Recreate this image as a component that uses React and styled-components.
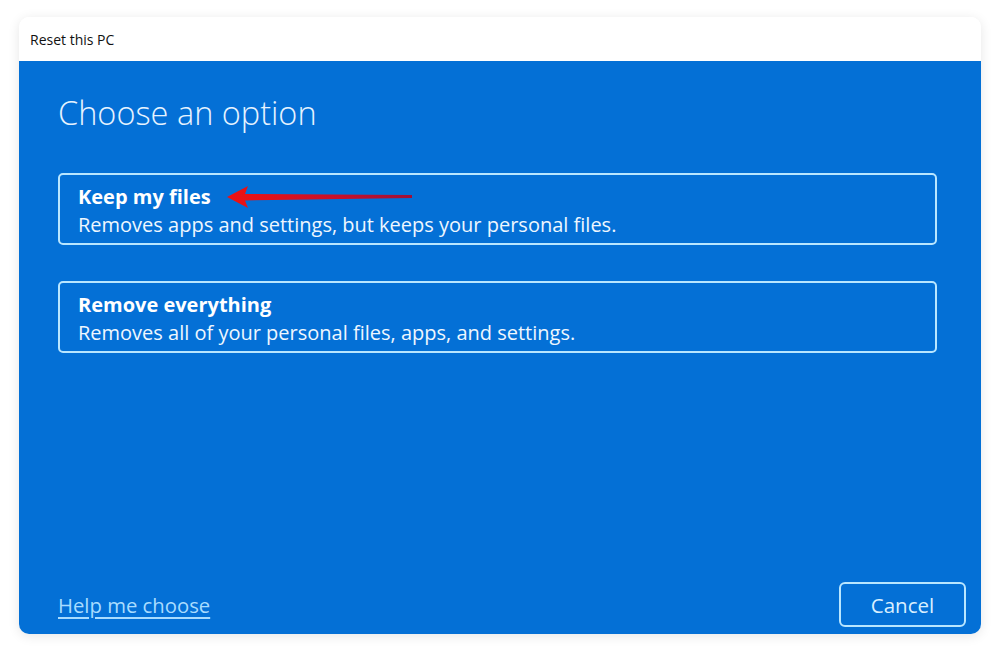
import React from 'react'
import styled, { createGlobalStyle } from 'styled-components'

const Global = createGlobalStyle`
    html, body {
        margin: 0;
        padding: 0;
        background: #ffffff;
    }
    body {
        font-family: "Open Sans", "Noto Sans", sans-serif;
    }
`

const Page = styled.div`
    width: 1000px;
    height: 654px;
    padding: 17px 19px 20px 19px;
    box-sizing: border-box;
`

const Window = styled.section`
    display: flex;
    flex-direction: column;
    height: 617px;
    border-radius: 10px;
    overflow: hidden;
    box-shadow: 0 2px 12px rgba(0, 0, 0, 0.1);
`

const TitleBar = styled.header`
    display: flex;
    align-items: center;
    height: 44px;
    padding-left: 11px;
    background: #ffffff;
    color: #111;
    font-size: 14px;
    font-family: "Open Sans", sans-serif;
`

const Body = styled.main`
    flex: 1;
    display: flex;
    flex-direction: column;
    background: #0470d6;
    padding: 29px 44px 7px 39px;
`

const Heading = styled.h1`
    margin: 0 0 37px 0;
    font-weight: 300;
    font-size: 32.5px;
    line-height: 46px;
    color: #e6f3ff;
`

const Option = styled.button`
    position: relative;
    display: flex;
    flex-direction: column;
    align-items: flex-start;
    justify-content: center;
    height: 72px;
    margin-bottom: 36px;
    padding: 4px 18px 0 18px;
    background: transparent;
    border: 2px solid #b9e6ff;
    border-radius: 5px;
    color: #ffffff;
    font-family: "Open Sans", sans-serif;
    text-align: left;
    cursor: pointer;
`

const OptionTitle = styled.span`
    font-weight: 700;
    font-size: 20px;
    line-height: 28px;
`

const OptionText = styled.span`
    font-size: 20px;
    line-height: 28px;
    color: #eef7ff;
`

const Arrow = styled.svg`
    position: absolute;
    left: 166px;
    top: 9px;
`

const Footer = styled.footer`
    margin-top: auto;
    display: flex;
    align-items: center;
    justify-content: space-between;
`

const Link = styled.a`
    font-size: 20.3px;
    color: #a9dcff;
    text-decoration: underline;
    text-underline-offset: 4px;
    cursor: pointer;
`

const Cancel = styled.button`
    width: 127px;
    height: 45px;
    margin-right: -29px;
    background: transparent;
    border: 2px solid #b9e6ff;
    border-radius: 6px;
    color: #d9efff;
    font-family: "Open Sans", sans-serif;
    font-size: 20.5px;
    cursor: pointer;
`

const RedArrow = () => (
    <Arrow width="190" height="26" viewBox="0 0 190 26">
        <defs>
            <linearGradient id="tail" x1="0" x2="1" y1="0" y2="0">
                <stop offset="0" stopColor="#ee1212" />
                <stop offset="0.6" stopColor="#c8102a" />
                <stop offset="1" stopColor="#a01038" />
            </linearGradient>
        </defs>
        <path
            d="M1 13 L22 2 L19 10 L186 11 L186 14 L19 16.5 L22 24 Z"
            fill="url(#tail)"
        />
    </Arrow>
)

const App = () => {
    return (
        <Page>
            <Global />
            <Window>
                <TitleBar>Reset this PC</TitleBar>
                <Body>
                    <Heading>Choose an option</Heading>
                    <Option>
                        <OptionTitle>Keep my files</OptionTitle>
                        <OptionText>Removes apps and settings, but keeps your personal files.</OptionText>
                        <RedArrow />
                    </Option>
                    <Option>
                        <OptionTitle>Remove everything</OptionTitle>
                        <OptionText>Removes all of your personal files, apps, and settings.</OptionText>
                    </Option>
                    <Footer>
                        <Link>Help me choose</Link>
                        <Cancel>Cancel</Cancel>
                    </Footer>
                </Body>
            </Window>
        </Page>
    )
}

export default App
